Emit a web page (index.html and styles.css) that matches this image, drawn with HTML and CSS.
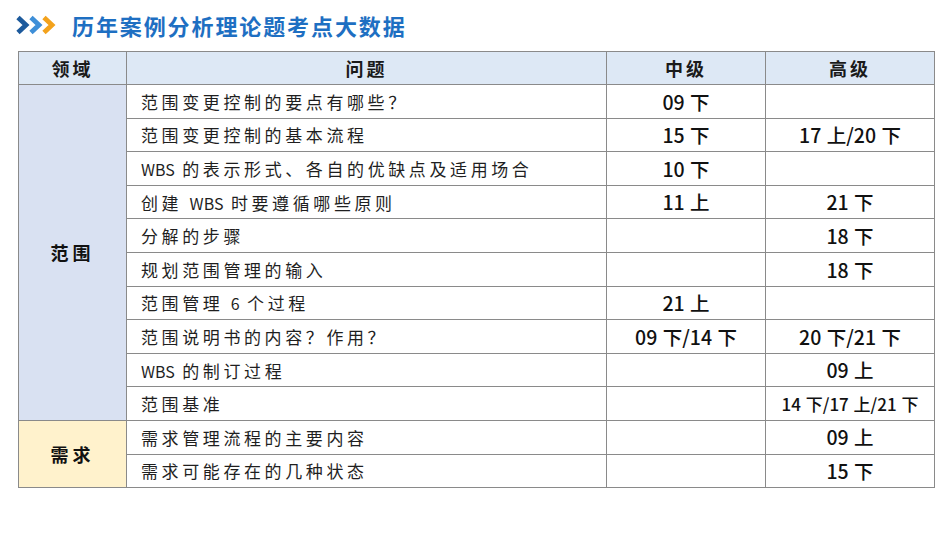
FILE: index.html
```html
<!DOCTYPE html>
<html lang="zh-CN">
<head>
<meta charset="utf-8">
<title>历年案例分析理论题考点大数据</title>
<link rel="stylesheet" href="styles.css">
</head>
<body>
<div class="page">
  <header class="title-bar">
    <svg class="chevrons" width="40" height="20" viewBox="0 0 40 20" aria-hidden="true">
      <polyline points="2,2.5 10,10 2,17.5" fill="none" stroke="#1d5a9c" stroke-width="4.8"/>
      <polyline points="15,2.5 23,10 15,17.5" fill="none" stroke="#3e8fd8" stroke-width="4.8"/>
      <polyline points="28,2.5 36,10 28,17.5" fill="none" stroke="#f3a21c" stroke-width="4.8"/>
    </svg>
    <h1 class="title">历年案例分析理论题考点大数据</h1>
  </header>
  <table class="grid">
    <colgroup>
      <col class="c-domain">
      <col class="c-question">
      <col class="c-mid">
      <col class="c-high">
    </colgroup>
    <thead>
      <tr class="head-row">
        <th>领域</th>
        <th>问题</th>
        <th>中级</th>
        <th>高级</th>
      </tr>
    </thead>
    <tbody>
      <tr>
        <td class="domain scope" rowspan="10">范围</td>
        <td class="q">范围变更控制的要点有哪些？</td>
        <td class="n">09 下</td>
        <td class="n"></td>
      </tr>
      <tr><td class="q">范围变更控制的基本流程</td><td class="n">15 下</td><td class="n">17 上/20 下</td></tr>
      <tr><td class="q"><span class="lat">WBS</span> 的表示形式、各自的优缺点及适用场合</td><td class="n">10 下</td><td class="n"></td></tr>
      <tr><td class="q">创建 <span class="lat">WBS</span> 时要遵循哪些原则</td><td class="n">11 上</td><td class="n">21 下</td></tr>
      <tr><td class="q">分解的步骤</td><td class="n"></td><td class="n">18 下</td></tr>
      <tr><td class="q">规划范围管理的输入</td><td class="n"></td><td class="n">18 下</td></tr>
      <tr><td class="q">范围管理 <span class="lat">6</span> 个过程</td><td class="n">21 上</td><td class="n"></td></tr>
      <tr><td class="q">范围说明书的内容？作用？</td><td class="n">09 下/14 下</td><td class="n">20 下/21 下</td></tr>
      <tr><td class="q"><span class="lat">WBS</span> 的制订过程</td><td class="n"></td><td class="n">09 上</td></tr>
      <tr><td class="q">范围基准</td><td class="n"></td><td class="n small">14 下/17 上/21 下</td></tr>
      <tr>
        <td class="domain req" rowspan="2">需求</td>
        <td class="q">需求管理流程的主要内容</td>
        <td class="n"></td>
        <td class="n">09 上</td>
      </tr>
      <tr><td class="q">需求可能存在的几种状态</td><td class="n"></td><td class="n">15 下</td></tr>
    </tbody>
  </table>
</div>
</body>
</html>
```

FILE: styles.css
```css
* { box-sizing: border-box; }
html, body {
  margin: 0;
  padding: 0;
  background: #ffffff;
}
body {
  font-family: "Noto Sans CJK SC", "Noto Sans", sans-serif;
  color: #1a1a1a;
}
.page {
  width: 950px;
  height: 535px;
  padding: 0 0 0 16px;
}
.title-bar {
  display: flex;
  align-items: center;
  height: 51px;
  padding-bottom: 2px;
}
.chevrons {
  display: block;
}
.title {
  margin: 0 0 0 16px;
  font-size: 22px;
  font-weight: 700;
  letter-spacing: 1.9px;
  color: #1e6fc2;
  line-height: 1;
}
.grid {
  border-collapse: collapse;
  width: 916px;
  table-layout: fixed;
  margin-left: 2px;
}
.c-domain { width: 108px; }
.c-question { width: 480px; }
.c-mid { width: 159px; }
.c-high { width: 169px; }
.grid th, .grid td {
  border: 1px solid #8a8a8a;
  padding: 0;
  line-height: 1;
}
.head-row th {
  height: 33px;
  background: #dde8f5;
  font-size: 18px;
  font-weight: 700;
  letter-spacing: 3px;
  text-align: center;
  color: #1a1a1a;
}
.grid tbody tr { height: 33.6px; }
.q {
  padding-left: 14px !important;
  font-size: 17px;
  font-weight: 400;
  letter-spacing: 3.6px;
  color: #1f1f1f;
  white-space: nowrap;
}
.lat {
  letter-spacing: 0;
  font-size: 16px;
}
.n {
  text-align: center;
  font-size: 19.5px;
  font-weight: 500;
  word-spacing: 1px;
  color: #111;
  white-space: nowrap;
}
.n.small {
  font-size: 17px;
}
.domain {
  text-align: center;
  font-size: 18px;
  font-weight: 700;
  letter-spacing: 4px;
  color: #111;
}
.scope { background: #d9e1f2; }
.req { background: #fff2cc; }
```
